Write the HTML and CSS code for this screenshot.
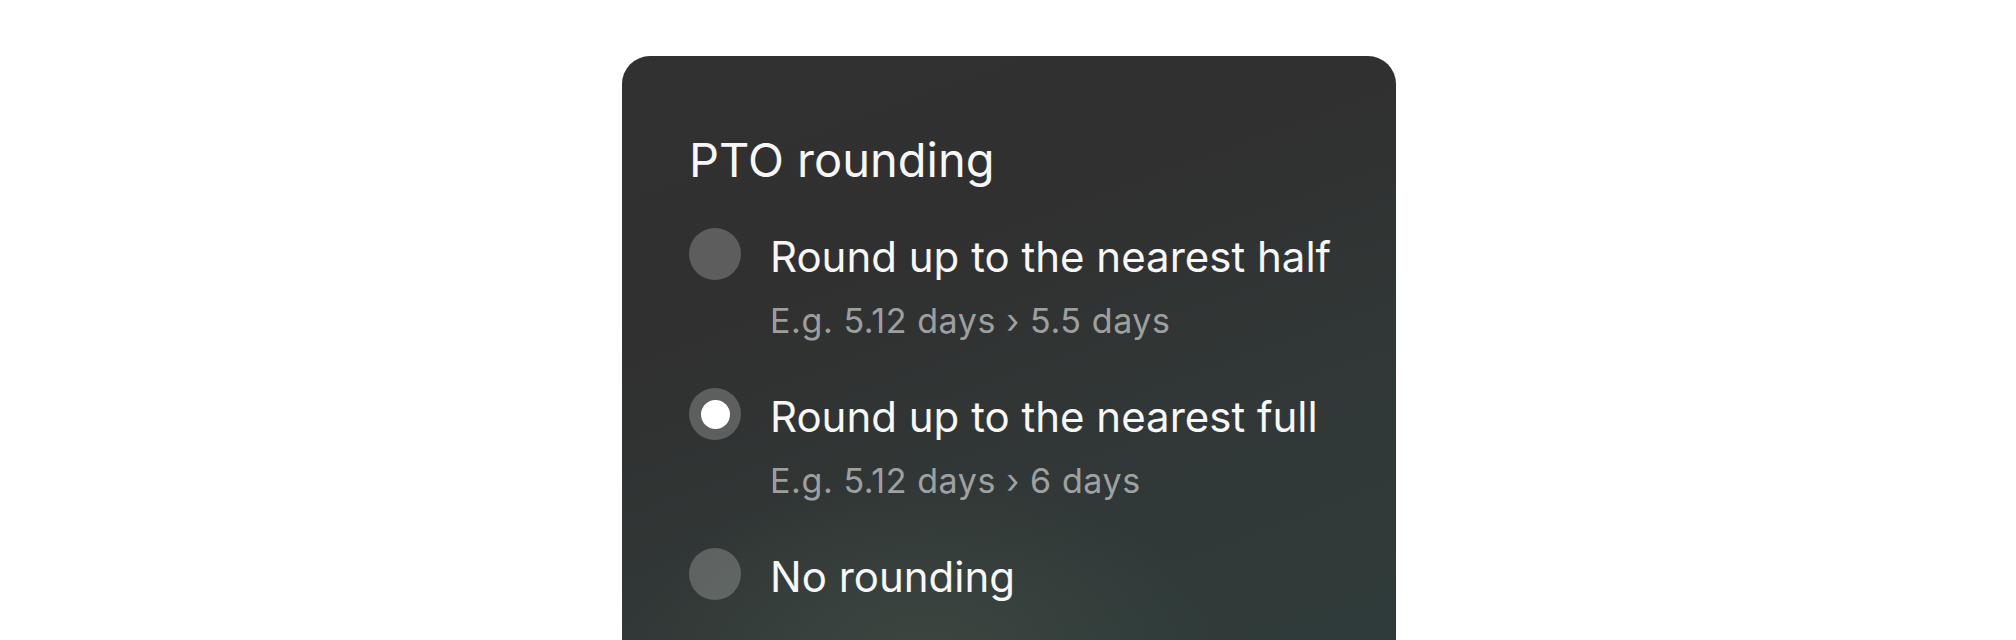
FILE: index.html
```html
<!DOCTYPE html>
<html lang="en">
<head>
    <meta charset="UTF-8">
    <meta name="viewport" content="width=device-width, initial-scale=1.0">
    <title>PTO rounding</title>
    <link rel="stylesheet" href="styles.css">
</head>
<body>
    <div class="page">
        <div class="card">
            <h2 class="title">PTO rounding</h2>

            <div class="options">
                <!-- Half day -->
                <div class="option">
                    <span class="radio"></span>
                    <div class="option-text">
                        <div class="label">Round up to the nearest half</div>
                        <div class="hint">E.g. 5.12 days › 5.5 days</div>
                    </div>
                </div>

                <!-- Full day -->
                <div class="option">
                    <span class="radio checked"></span>
                    <div class="option-text">
                        <div class="label">Round up to the nearest full</div>
                        <div class="hint">E.g. 5.12 days › 6 days</div>
                    </div>
                </div>

                <!-- None -->
                <div class="option">
                    <span class="radio"></span>
                    <div class="option-text">
                        <div class="label">No rounding</div>
                    </div>
                </div>
            </div>
        </div>
    </div>
</body>
</html>
```

FILE: styles.css
```css
body {
    margin: 0;
    background: #ffffff;
    font-family: Inter, "Noto Sans", sans-serif;
    height: 640px;
    overflow: hidden;
}
.page {
    display: flex;
    justify-content: center;
    padding-top: 56px;
    padding-left: 2px;
}
.card {
    width: 774px;
    min-height: 700px;
    box-sizing: border-box;
    padding: 76px 40px 60px 67px;
    border-radius: 28px;
    background:
        radial-gradient(ellipse 420px 260px at 300px 600px, rgba(80, 95, 80, 0.35), rgba(80, 95, 80, 0) 70%),
        linear-gradient(160deg, #313131 0%, #303030 30%, #313837 60%, #2e3d3c 100%);
}
.title {
    margin: 0;
    font-size: 47px;
    line-height: 56px;
    font-weight: 400;
    color: #f7f7f7;
}
.options {
    display: flex;
    flex-direction: column;
    gap: 47px;
    margin-top: 40px;
}
.option {
    display: grid;
    grid-template-columns: 52px 1fr;
    gap: 29px;
    align-items: start;
}
.radio {
    width: 52px;
    height: 52px;
    border-radius: 50%;
    background: rgba(255, 255, 255, 0.22);
    display: flex;
    align-items: center;
    justify-content: center;
}
.radio.checked::after {
    content: "";
    width: 29px;
    height: 29px;
    border-radius: 50%;
    background: #ffffff;
}
.label {
    padding-top: 3px;
    font-size: 42px;
    line-height: 52px;
    color: #f7f7f7;
    white-space: nowrap;
}
.hint {
    margin-top: 18px;
    font-size: 34px;
    line-height: 40px;
    letter-spacing: 0.6px;
    color: rgba(255, 255, 255, 0.55);
    white-space: nowrap;
}
```
